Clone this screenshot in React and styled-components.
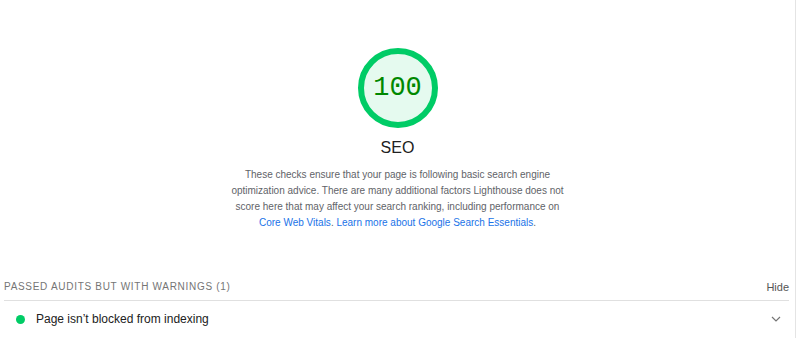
import React from "react";
import styled, { createGlobalStyle } from "styled-components";

const Global = createGlobalStyle`
  html, body { margin: 0; padding: 0; background: #fff; }
  body { font-family: "Liberation Sans", Arial, sans-serif; }
`;

const Page = styled.div`
  width: 796px;
  height: 338px;
  border-right: 1px solid #e4e4e4;
  box-sizing: border-box;
  display: flex;
  flex-direction: column;
  overflow: hidden;
`;

const Header = styled.div`
  display: flex;
  flex-direction: column;
  align-items: center;
  padding-top: 47px;
`;

const Gauge = styled.div`
  position: relative;
  width: 82px;
  height: 82px;
  display: flex;
  align-items: center;
  justify-content: center;
`;

const GaugeSvg = styled.svg`
  position: absolute;
  inset: 0;
`;

const Score = styled.div`
  position: relative;
  font-family: "Liberation Mono", "DejaVu Sans Mono", monospace;
  font-size: 27px;
  color: #008800;
`;

const Title = styled.div`
  margin-top: 9px;
  font-size: 16px;
  color: #212121;
  line-height: 20px;
`;

const Description = styled.p`
  margin: 9px 0 0;
  width: 336px;
  text-align: center;
  font-size: 10px;
  line-height: 16px;
  color: #5f6368;
`;

const Link = styled.a`
  color: #1a73e8;
  text-decoration: none;
`;

const Group = styled.div`
  margin-top: 42px;
  padding: 0 6px 0 4px;
`;

const GroupHeader = styled.div`
  display: flex;
  justify-content: space-between;
  align-items: center;
  height: 27px;
  border-bottom: 1px solid #e0e0e0;
`;

const GroupTitle = styled.span`
  font-size: 10px;
  text-transform: uppercase;
  letter-spacing: 0.7px;
  color: #757575;
`;

const Hide = styled.span`
  font-size: 11px;
  color: #555;
`;

const AuditRow = styled.div`
  display: flex;
  align-items: center;
  height: 36px;
  padding-left: 12px;
`;

const Dot = styled.span`
  width: 9px;
  height: 9px;
  border-radius: 50%;
  background: #0c6;
  margin-right: 11px;
`;

const AuditText = styled.span`
  flex: 1;
  font-size: 12px;
  color: #212121;
`;

const Chevron = styled.svg`
  margin-right: 8px;
`;

export default function App() {
  return (
    <>
      <Global />
      <Page>
        <Header>
          <Gauge>
            <GaugeSvg width="82" height="82" viewBox="0 0 82 82">
              <circle cx="41" cy="41" r="37" fill="rgba(0,204,102,0.1)" stroke="#0c6" strokeWidth="6" />
            </GaugeSvg>
            <Score>100</Score>
          </Gauge>
          <Title>SEO</Title>
          <Description>
            These checks ensure that your page is following basic search engine optimization advice. There are many additional factors Lighthouse does not score here that may affect your search ranking, including performance on{" "}
            <Link href="#">Core Web Vitals</Link>. <Link href="#">Learn more about Google Search Essentials</Link>.
          </Description>
        </Header>
        <Group>
          <GroupHeader>
            <GroupTitle>Passed audits but with warnings (1)</GroupTitle>
            <Hide>Hide</Hide>
          </GroupHeader>
          <AuditRow>
            <Dot />
            <AuditText>Page isn’t blocked from indexing</AuditText>
            <Chevron width="10" height="6" viewBox="0 0 10 6">
              <path d="M1 1l4 4 4-4" fill="none" stroke="#757575" strokeWidth="1.2" />
            </Chevron>
          </AuditRow>
        </Group>
      </Page>
    </>
  );
}
